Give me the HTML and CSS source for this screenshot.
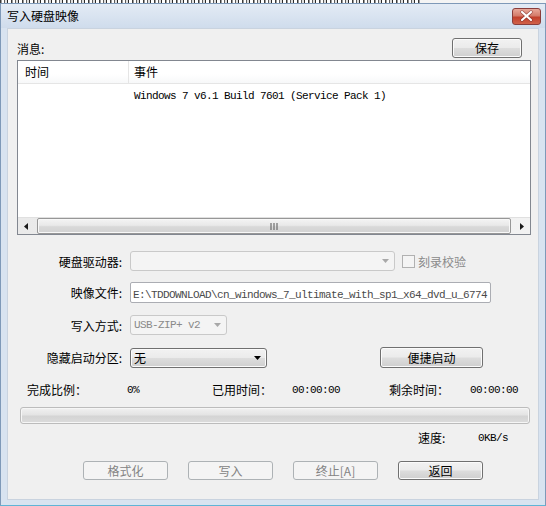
FILE: index.html
```html
<!DOCTYPE html>
<html>
<head>
<meta charset="utf-8">
<title>写入硬盘映像</title>
<link rel="stylesheet" href="styles.css">
</head>
<body>
<div class="behind"><div class="behind-text"></div></div>
<div class="window">
  <div class="titlebar">
    <span class="title">写入硬盘映像</span>
    <span class="close">
      <svg width="29" height="17" viewBox="0 0 29 17">
        <path d="M10 4 L19 12 M19 4 L10 12" stroke="#6b2222" stroke-width="3.4" stroke-linecap="round" opacity="0.6"/>
        <path d="M10 4 L19 12 M19 4 L10 12" stroke="#ffffff" stroke-width="2.2" stroke-linecap="round"/>
      </svg>
    </span>
  </div>
  <div class="client">
    <div class="msg-row">
      <span class="msg-label">消息:</span>
      <button class="btn save">保存</button>
    </div>
    <div class="list">
      <div class="list-head">
        <div class="hcol c1">时间</div>
        <div class="hcol c2">事件</div>
      </div>
      <div class="list-body">
        <div class="lrow">
          <div class="c1"></div>
          <div class="c2 mono">Windows 7 v6.1 Build 7601 (Service Pack 1)</div>
        </div>
      </div>
      <div class="hscroll">
        <div class="sarrow">
          <svg width="5" height="7" viewBox="0 0 5 7"><path d="M4 0 L0 3.5 L4 7 Z" fill="#1a1a1a"/></svg>
        </div>
        <div class="track">
          <div class="thumb">
            <svg width="8" height="7" viewBox="0 0 8 7"><path d="M1 0 V7 M4 0 V7 M7 0 V7" stroke="#555" stroke-width="1"/></svg>
          </div>
        </div>
        <div class="sarrow">
          <svg width="5" height="7" viewBox="0 0 5 7"><path d="M1 0 L5 3.5 L1 7 Z" fill="#1a1a1a"/></svg>
        </div>
      </div>
    </div>

    <div class="frow r1">
      <label class="flabel">硬盘驱动器:</label>
      <div class="combo disabled w-drive">
        <span class="cval"></span>
        <span class="carrow"><svg width="7" height="4" viewBox="0 0 7 4"><path d="M0 0 H7 L3.5 4 Z" fill="#a8a8a8"/></svg></span>
      </div>
      <span class="check"></span>
      <span class="check-label">刻录校验</span>
    </div>

    <div class="frow r2">
      <label class="flabel">映像文件:</label>
      <div class="input"><span class="mono">E:\TDDOWNLOAD\cn_windows_7_ultimate_with_sp1_x64_dvd_u_6774</span></div>
    </div>

    <div class="frow r3">
      <label class="flabel">写入方式:</label>
      <div class="combo disabled w-mode">
        <span class="cval mono grey">USB-ZIP+ v2</span>
        <span class="carrow"><svg width="7" height="4" viewBox="0 0 7 4"><path d="M0 0 H7 L3.5 4 Z" fill="#a8a8a8"/></svg></span>
      </div>
    </div>

    <div class="frow r4">
      <label class="flabel">隐藏启动分区:</label>
      <div class="combo enabled w-hide">
        <span class="cval">无</span>
        <span class="carrow"><svg width="7" height="4" viewBox="0 0 7 4"><path d="M0 0 H7 L3.5 4 Z" fill="#000"/></svg></span>
      </div>
      <button class="btn quick">便捷启动</button>
    </div>

    <div class="stats">
      <span class="s1">完成比例：</span>
      <span class="s2 mono">0%</span>
      <span class="s3">已用时间：</span>
      <span class="s4 mono">00:00:00</span>
      <span class="s5">剩余时间：</span>
      <span class="s6 mono">00:00:00</span>
    </div>

    <div class="progress"></div>

    <div class="speed">
      <span class="sp1">速度:</span>
      <span class="sp2 mono">0KB/s</span>
    </div>

    <div class="actions">
      <button class="btn act" disabled>格式化</button>
      <button class="btn act" disabled>写入</button>
      <button class="btn act" disabled>终止[A]</button>
      <button class="btn act">返回</button>
    </div>
  </div>
</div>
</body>
</html>
```
FILE: styles.css
```css
* { box-sizing: border-box; }
html, body { margin: 0; padding: 0; }
body {
  width: 546px;
  height: 506px;
  overflow: hidden;
  background: #ffffff;
  font-family: "Noto Sans CJK SC", "Liberation Sans", sans-serif;
  font-size: 12px;
  color: #000;
}
.mono {
  font-family: "Liberation Mono", "DejaVu Sans Mono", monospace;
  font-size: 11px;
  letter-spacing: -0.6px;
}
.grey { color: #8a8a8a; }

.behind { height: 3px; background: #f4f4f4; }
.behind-text {
  width: 420px;
  height: 3px;
  background: repeating-linear-gradient(90deg, #3a3a3a 0 1px, #9a9a9a 1px 2px, #ffffff 2px 4px, #5a5a5a 4px 5px, #e0e0e0 5px 7px, #2a2a2a 7px 8px, #ffffff 8px 11px);
}

.window {
  height: 503px;
  background: #d8e3f0;
  border: 1px solid #7e99b8;
  border-bottom-color: #5fb4d6;
  padding: 0 6px 5px 6px;
  display: flex;
  flex-direction: column;
}
.titlebar {
  height: 24px;
  margin: 0 -6px;
  padding: 0 4px 0 6px;
  display: flex;
  align-items: center;
  justify-content: space-between;
  background: linear-gradient(#e3ebf5, #cfdcec);
}
.title { font-size: 12px; color: #000; line-height: 14px; }
.close {
  width: 29px;
  height: 17px;
  margin-top: 1px;
  border: 1px solid #8a3d3a;
  border-radius: 3px;
  background: linear-gradient(#e9a99a 0%, #d47c6b 45%, #c2412c 55%, #d1624a 100%);
  display: flex;
  align-items: center;
  justify-content: center;
  overflow: hidden;
}
.close svg { display: block; margin: -1px; }

.client {
  flex: 1;
  background: #f0f0f0;
  border: 1px solid #c9d3df;
  padding: 9px 0 0 0;
}

.msg-row {
  display: flex;
  justify-content: space-between;
  align-items: flex-end;
  padding: 0 16px 0 9px;
  height: 20px;
}
.msg-label { line-height: 14px; margin-bottom: 2px; }

.btn {
  font: inherit;
  font-size: 12px;
  height: 20px;
  padding: 0;
  color: #000;
  border: 1px solid #707070;
  border-radius: 3px;
  background: linear-gradient(#f2f2f2 0%, #ebebeb 48%, #dddddd 52%, #cfcfcf 100%);
  box-shadow: inset 0 0 0 1px #fbfbfb;
  line-height: 16px;
}
.btn:disabled {
  border-color: #adb2b5;
  background: #f4f4f4;
  color: #838383;
  box-shadow: none;
}
.save { width: 70px; }

.list {
  margin: 2px 7px 0 9px;
  height: 175px;
  border: 1px solid #828790;
  background: #fff;
  display: flex;
  flex-direction: column;
}
.list-head {
  height: 23px;
  display: flex;
  border-bottom: 1px solid #e5e5e5;
  background: linear-gradient(#ffffff, #ffffff 60%, #f7f8f9);
}
.hcol { line-height: 22px; }
.c1 { width: 111px; padding-left: 7px; flex: none; }
.hcol.c1 { border-right: 1px solid #e5e5e5; }
.c2 { padding-left: 5px; flex: 1; }
.list-body { flex: 1; }
.lrow { display: flex; height: 18px; margin-top: 3px; line-height: 18px; }

.hscroll {
  height: 17px;
  display: flex;
  background: linear-gradient(90deg, #eaeaea, #f2f2f2);
  border-top: 1px solid #e0e0e0;
}
.sarrow {
  width: 17px;
  display: flex;
  align-items: center;
  justify-content: center;
  flex: none;
}
.track { flex: 1; display: flex; padding: 0 2px; }
.thumb {
  flex: 1;
  border: 1px solid #979797;
  border-radius: 2px;
  background: linear-gradient(#f4f4f4 0%, #e9e9e9 45%, #d9d9d9 55%, #d2d2d2 100%);
  box-shadow: inset 0 0 0 1px #f8f8f8;
  display: flex;
  align-items: center;
  justify-content: center;
}

.frow {
  display: flex;
  align-items: center;
  height: 20px;
}
.r1 { margin-top: 16px; }
.r2 { margin-top: 11px; height: 21px; }
.r3 { margin-top: 12px; }
.r4 { margin-top: 12px; height: 21px; }
.flabel { width: 114px; text-align: right; flex: none; margin-right: 8px; }

.combo {
  height: 20px;
  display: flex;
  align-items: center;
  border-radius: 3px;
}
.combo.disabled {
  border: 1px solid #c9c9c9;
  background: #f4f4f4;
}
.combo.enabled {
  border: 1px solid #707070;
  background: linear-gradient(#f2f2f2 0%, #ebebeb 48%, #dddddd 52%, #cfcfcf 100%);
  box-shadow: inset 0 0 0 1px #fbfbfb;
}
.cval { flex: 1; padding-left: 3px; white-space: nowrap; overflow: hidden; }
.carrow { width: 17px; display: flex; justify-content: center; align-items: center; }
.w-drive { width: 265px; }
.w-mode { width: 97px; }
.w-hide { width: 137px; }
.check {
  width: 13px;
  height: 13px;
  margin-left: 7px;
  border: 1px solid #b1b1b1;
  background: #f4f4f4;
}
.check-label { color: #8a8a8a; margin-left: 3px; }

.input {
  width: 361px;
  height: 21px;
  border: 1px solid #abadb3;
  border-radius: 2px;
  background: #fff;
  color: #4a4a4a;
  padding-left: 2px;
  line-height: 19px;
  white-space: nowrap;
  overflow: hidden;
}
.quick { width: 103px; height: 21px; margin-left: 113px; }

.stats {
  display: flex;
  margin-top: 15px;
  padding-left: 19px;
  height: 14px;
  line-height: 14px;
  align-items: center;
}
.s1 { width: 100px; }
.s2 { width: 85px; }
.s3 { width: 80px; }
.s4 { width: 97px; }
.s5 { width: 81px; }

.progress {
  margin: 10px 8px 0 12px;
  height: 17px;
  border: 1px solid #bcbcbc;
  border-radius: 3px;
  background: linear-gradient(#f1f1f1 0%, #e4e4e4 45%, #d4d4d4 55%, #dcdcdc 100%);
  box-shadow: inset 0 0 0 1px #f6f6f6;
}

.speed {
  display: flex;
  margin-top: 7px;
  padding-left: 410px;
  height: 14px;
  line-height: 14px;
  align-items: center;
}
.sp1 { width: 60px; }

.actions {
  display: flex;
  gap: 20px;
  margin-top: 16px;
  padding-left: 75px;
}
.act { width: 85px; height: 19px; line-height: 15px; }
```
